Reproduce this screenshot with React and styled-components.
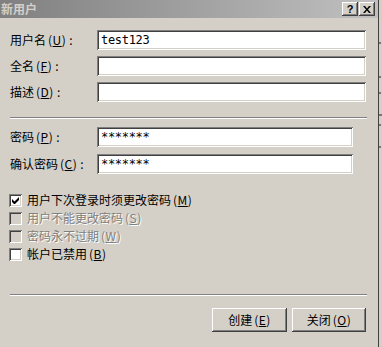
import React from 'react';
import styled, { createGlobalStyle, css } from 'styled-components';

const GlobalStyle = createGlobalStyle`
  html, body {
    margin: 0;
    padding: 0;
    background: #d4d0c8;
  }
  body {
    font-family: "Noto Sans CJK SC", "Liberation Sans", sans-serif;
    font-size: 12px;
    color: #000;
  }
`;

const sunken = css`
  box-sizing: border-box;
  background: #fff;
  box-shadow: inset 1px 1px #808080, inset -1px -1px #fff,
    inset 2px 2px #404040, inset -2px -2px #d4d0c8;
`;

const raised = css`
  box-sizing: border-box;
  background: #d4d0c8;
  box-shadow: inset -1px -1px #404040, inset 1px 1px #fff,
    inset -2px -2px #808080, inset 2px 2px #d4d0c8;
`;

const Screen = styled.div`
  display: flex;
  width: 382px;
  height: 347px;
  overflow: hidden;
`;

const Dialog = styled.div`
  width: 379px;
  box-sizing: border-box;
  border-right: 1px solid #404040;
  display: flex;
  flex-direction: column;
`;

const Behind = styled.div`
  flex: 1;
  background: #d4d0c8;
  display: flex;
`;

const TitleBar = styled.div`
  height: 18px;
  display: flex;
  align-items: center;
  padding: 0 3px 0 1px;
  background: linear-gradient(to right, #808080, #c0c0c0);
`;

const Title = styled.div`
  flex: 1;
  color: #d4d0c8;
  font-weight: bold;
  font-size: 12px;
  line-height: 18px;
`;

const CaptionButton = styled.div`
  ${raised};
  width: 16px;
  height: 14px;
  display: flex;
  align-items: center;
  justify-content: center;
  font-family: "Liberation Sans", sans-serif;
  font-weight: bold;
  font-size: 11px;
  line-height: 1;
  & + & {
    margin-left: 1px;
  }
`;

const Body = styled.div`
  padding: 12px 11px 0 10px;
  display: flex;
  flex-direction: column;
`;

const Fields = styled.div`
  display: flex;
  flex-direction: column;
  gap: ${(p) => p.$gap}px;
  margin-top: ${(p) => p.$top || 0}px;
`;

const Row = styled.div`
  display: flex;
  align-items: center;
  height: 20px;
`;

const Label = styled.label`
  width: 87px;
  line-height: 14px;
  white-space: nowrap;
`;

const Colon = styled.span`
  margin-left: 3px;
`;

const Mnemonic = styled.span`
  margin-left: 2px;
  letter-spacing: 0.5px;
`;

const TextBox = styled.div`
  ${sunken};
  width: ${(p) => p.$width}px;
  height: 20px;
  padding: 0 4px;
  display: flex;
  align-items: center;
  font-family: "DejaVu Sans Mono", "Liberation Mono", monospace;
  font-size: 12px;
  letter-spacing: -0.3px;
`;

const Separator = styled.div`
  height: 0;
  border-top: 1px solid #808080;
  border-bottom: 1px solid #fff;
  margin-top: ${(p) => p.$top}px;
`;

const Checks = styled.div`
  display: flex;
  flex-direction: column;
  margin-top: 17px;
`;

const CheckRow = styled.div`
  display: flex;
  align-items: center;
  height: 18px;
  margin-left: -1px;
  gap: 5px;
  line-height: 14px;
  color: ${(p) => (p.$disabled ? '#808080' : '#000')};
  text-shadow: ${(p) => (p.$disabled ? '1px 1px #fff' : 'none')};
`;

const Box = styled.div`
  ${sunken};
  width: 13px;
  height: 13px;
  flex: none;
  background: ${(p) => (p.$disabled ? '#d4d0c8' : '#fff')};
  display: flex;
  align-items: center;
  justify-content: center;
`;

const Buttons = styled.div`
  display: flex;
  justify-content: flex-end;
  gap: 5px;
  margin: 12px 1px 0 0;
`;

const PushButton = styled.button`
  ${raised};
  width: ${(p) => p.$width}px;
  height: 24px;
  border: 0;
  padding: 0;
  font-family: inherit;
  font-size: 12px;
  line-height: 14px;
  color: #000;
`;

const Key = ({ k }) => (
  <Mnemonic>
    (<u>{k}</u>)
  </Mnemonic>
);

const Check = ({ checked, disabled, children }) => (
  <CheckRow $disabled={disabled}>
    <Box $disabled={disabled}>
      {checked && (
        <svg width="7" height="7" viewBox="0 0 7 7">
          <path d="M0 2v3l2 2h1l4-4V0L2.5 4.5z" fill="#000" />
        </svg>
      )}
    </Box>
    <span>{children}</span>
  </CheckRow>
);

export default function App() {
  return (
    <>
      <GlobalStyle />
      <Screen>
        <Dialog>
          <TitleBar>
            <Title>新用户</Title>
            <CaptionButton>?</CaptionButton>
            <CaptionButton>
              <svg width="8" height="7" viewBox="0 0 8 7">
                <path d="M0 0h2l2 2.5L6 0h2L5 3.5 8 7H6L4 4.5 2 7H0l3-3.5z" fill="#000" />
              </svg>
            </CaptionButton>
          </TitleBar>
          <Body>
            <Fields $gap={6}>
              <Row>
                <Label>用户名<Key k="U" /><Colon>:</Colon></Label>
                <TextBox $width={269}>test123</TextBox>
              </Row>
              <Row>
                <Label>全名<Key k="F" /><Colon>:</Colon></Label>
                <TextBox $width={269} />
              </Row>
              <Row>
                <Label>描述<Key k="D" /><Colon>:</Colon></Label>
                <TextBox $width={269} />
              </Row>
            </Fields>
            <Separator $top={15} />
            <Fields $gap={7} $top={8}>
              <Row>
                <Label>密码<Key k="P" /><Colon>:</Colon></Label>
                <TextBox $width={256}>*******</TextBox>
              </Row>
              <Row>
                <Label>确认密码<Key k="C" /><Colon>:</Colon></Label>
                <TextBox $width={256}>*******</TextBox>
              </Row>
            </Fields>
            <Checks>
              <Check checked>用户下次登录时须更改密码<Key k="M" /></Check>
              <Check disabled>用户不能更改密码<Key k="S" /></Check>
              <Check disabled>密码永不过期<Key k="W" /></Check>
              <Check>帐户已禁用<Key k="B" /></Check>
            </Checks>
            <Separator $top={31} />
            <Buttons>
              <PushButton $width={75}>创建<Key k="E" /></PushButton>
              <PushButton $width={74}>关闭<Key k="O" /></PushButton>
            </Buttons>
          </Body>
        </Dialog>
        <Behind>
          <svg width="3" height="347" viewBox="0 0 3 347">
            <path d="M0 43h2M0 77h2M0 93h2M0 115h3M0 125h2M0 147h2" stroke="#202020" strokeWidth="1" />
          </svg>
        </Behind>
      </Screen>
    </>
  );
}
